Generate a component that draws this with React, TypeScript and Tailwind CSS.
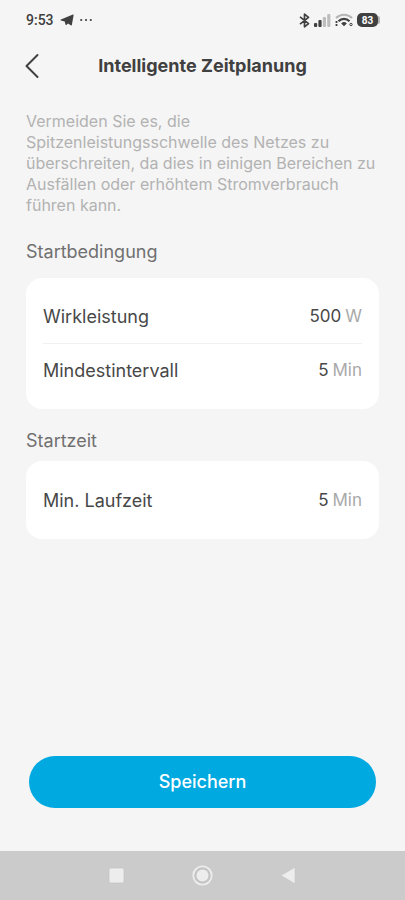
import type { ReactNode } from "react";
import clsx from "clsx";

type Field = { id: string; label: string; value: string; unit: string };

const conditionFields: Field[] = [
  { id: "power", label: "Wirkleistung", value: "500", unit: "W" },
  { id: "interval", label: "Mindestintervall", value: "5", unit: "Min" },
];

const timeFields: Field[] = [
  { id: "runtime", label: "Min. Laufzeit", value: "5", unit: "Min" },
];

function StatusBar() {
  return (
    <div className="flex h-10 items-center justify-between pl-[26px] pr-[25px] text-[#404040]">
      <div className="flex items-center gap-1.5">
        <span className="font-['Roboto',sans-serif] text-sm font-medium leading-5">9:53</span>
        <svg width="14" height="12" viewBox="0 0 14 12" fill="currentColor" aria-hidden="true">
          <path d="M12.9.6c.5-.2.8.1.7.6l-1.7 9.6c-.1.7-.6.9-1.1.5L8 9.4l-1.6 1.5c-.4.4-.8.2-.9-.3L4.700 7.600.9 6.500c-.6-.2-.6-.7 0-.9z" />
        </svg>
        <svg width="12" height="4" viewBox="0 0 12 4" fill="currentColor" aria-hidden="true">
          <circle cx="1.2" cy="2" r="1.1" />
          <circle cx="6" cy="2" r="1.1" />
          <circle cx="10.8" cy="2" r="1.1" />
        </svg>
      </div>

      <div className="flex items-center gap-1">
        {/* Bluetooth */}
        <svg width="11" height="15" viewBox="0 0 11 15" fill="none" stroke="currentColor" strokeWidth="1.7" strokeLinejoin="round" aria-hidden="true">
          <path d="M1 3.8 9.5 10.6 5.5 13.8V1.2L9.5 4.4 1 11.2" />
        </svg>
        {/* Signal */}
        <svg width="17" height="13" viewBox="0 0 17 13" fill="currentColor" aria-hidden="true">
          <rect x="0" y="9" width="3.2" height="4" rx="1" />
          <rect x="4.4" y="6" width="3.2" height="7" rx="1" />
          <rect x="8.8" y="3" width="3.2" height="10" rx="1" fill="#bdbdbd" />
          <rect x="13.2" y="0" width="3.2" height="13" rx="1" fill="#bdbdbd" />
        </svg>
        {/* WLAN */}
        <svg width="18" height="14" viewBox="0 0 18 14" fill="none" aria-hidden="true">
          <path d="M1 5a11.5 11.5 0 0 1 16 0" stroke="#b5b5b5" strokeWidth="2.2" />
          <path d="M3.5 8.2a7.8 7.8 0 0 1 11 0" stroke="currentColor" strokeWidth="2.2" />
          <path d="M6.2 10.4a4 4 0 0 1 5.600 0L9 13.2z" fill="currentColor" />
          <path d="M1.500 8v2M1.500 11v2" stroke="currentColor" strokeWidth="1.8" />
          <circle cx="16" cy="11.5" r="1.2" stroke="currentColor" />
        </svg>
        <div className="flex items-center">
          <span className="flex h-3.5 w-[21px] items-center justify-center rounded-[5px] bg-[#404040] font-['Roboto',sans-serif] text-[10px] font-bold text-white">
            83
          </span>
          <span className="h-2 w-0.5 rounded-r-sm bg-[#b5b5b5]" />
        </div>
      </div>
    </div>
  );
}

function FieldRow({ id, label, value, unit }: Field) {
  return (
    <div className="flex h-[53px] items-center justify-between">
      <label htmlFor={id} className="text-lg">{label}</label>
      <div className="flex items-center gap-1 text-[17px]">
        <input
          id={id}
          type="text"
          inputMode="numeric"
          defaultValue={value}
          className="w-16 bg-transparent text-right outline-none"
        />
        <span className="text-[#a9a9a9]">{unit}</span>
      </div>
    </div>
  );
}

function Section({ title, spacious, children }: { title: string; spacious?: boolean; children: ReactNode }) {
  return (
    <section>
      <h2 className={clsx("text-lg leading-6 text-[#707070]", spacious ? "pb-3.5" : "pb-2")}>{title}</h2>
      <div className="divide-y divide-[#f1f1f1] rounded-2xl bg-white px-[17px] pt-[13px] pb-3 text-[#484848]">
        {children}
      </div>
    </section>
  );
}

export default function App() {
  return (
    <div className="flex min-h-screen flex-col bg-[#f5f5f5] font-['Inter',sans-serif]">
      <StatusBar />

      <header className="grid h-[52px] grid-cols-[32px_1fr_32px] items-center px-4">
        <button type="button" aria-label="Zurück" className="flex justify-center text-[#404040]">
          <svg width="16" height="26" viewBox="0 0 16 26" fill="none" stroke="currentColor" strokeWidth="2" strokeLinecap="round" strokeLinejoin="round">
            <path d="M13.5 2 2.5 13l11 11" />
          </svg>
        </button>
        <h1 className="text-center text-lg font-bold text-[#404040]">Intelligente Zeitplanung</h1>
      </header>

      <main className="flex flex-1 flex-col px-[26px] pt-[19px] pb-[43px]">
        <p className="text-base leading-[21px] text-[#b2b2b2]">
          Vermeiden Sie es, die<br />
          Spitzenleistungsschwelle des Netzes zu<br />
          überschreiten, da dies in einigen Bereichen zu<br />
          Ausfällen oder erhöhtem Stromverbrauch<br />
          führen kann.
        </p>

        <div className="flex flex-col gap-5 pt-6">
          <Section title="Startbedingung" spacious>
            {conditionFields.map((field) => (
              <FieldRow key={field.id} {...field} />
            ))}
          </Section>
          <Section title="Startzeit">
            {timeFields.map((field) => (
              <FieldRow key={field.id} {...field} />
            ))}
          </Section>
        </div>

        <div className="mt-auto px-[3px] pt-8">
          <button type="button" className="h-[52px] w-full rounded-full bg-[#00a9e0] text-lg font-medium text-white">
            Speichern
          </button>
        </div>
      </main>

      {/* Android-Navigation */}
      <nav className="flex h-[49px] items-center justify-center gap-16 bg-[#cbcbcb]">
        <button type="button" aria-label="Letzte Apps">
          <svg width="22" height="22" viewBox="0 0 22 22">
            <rect x="3" y="3" width="15" height="15" rx="2" fill="#ededed" stroke="#c1c1c1" strokeWidth=".6" />
          </svg>
        </button>
        <button type="button" aria-label="Startseite">
          <svg width="22" height="22" viewBox="0 0 22 22">
            <circle cx="10.5" cy="10.5" r="9.2" fill="#c4c4c4" stroke="#ededed" strokeWidth="1.8" />
            <circle cx="10.5" cy="10.5" r="6" fill="#ededed" />
          </svg>
        </button>
        <button type="button" aria-label="Zurück">
          <svg width="22" height="22" viewBox="0 0 22 22">
            <path d="M3 10.5 17 2.2v16.6z" fill="#ededed" stroke="#c1c1c1" strokeWidth=".5" />
          </svg>
        </button>
      </nav>
    </div>
  );
}
